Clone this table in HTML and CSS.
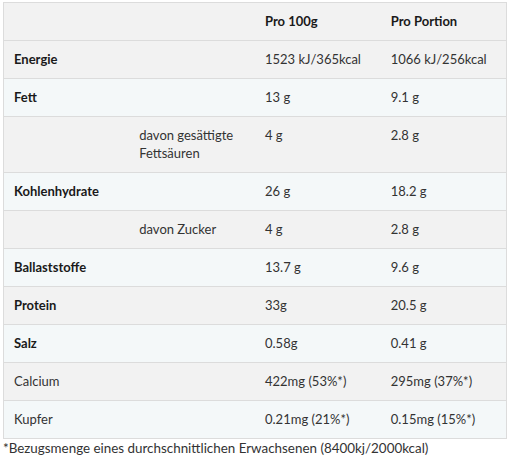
FILE: index.html
```html
<!DOCTYPE html>
<html lang="de">
<head>
<meta charset="utf-8">
<link rel="stylesheet" href="styles.css">
</head>
<body>
<div class="wrap">
<table class="nut">
<thead>
<tr><th></th><th></th><th>Pro 100g</th><th>Pro Portion</th></tr>
</thead>
<tbody>
<tr class="g"><td class="b">Energie</td><td></td><td>1523 kJ/365kcal</td><td>1066 kJ/256kcal</td></tr>
<tr class="s"><td class="b">Fett</td><td></td><td>13 g</td><td>9.1 g</td></tr>
<tr class="g"><td></td><td>davon gesättigte Fettsäuren</td><td>4 g</td><td>2.8 g</td></tr>
<tr class="s"><td class="b">Kohlenhydrate</td><td></td><td>26 g</td><td>18.2 g</td></tr>
<tr class="g"><td></td><td>davon Zucker</td><td>4 g</td><td>2.8 g</td></tr>
<tr class="s"><td class="b">Ballaststoffe</td><td></td><td>13.7 g</td><td>9.6 g</td></tr>
<tr class="g"><td class="b">Protein</td><td></td><td>33g</td><td>20.5 g</td></tr>
<tr class="s"><td class="b">Salz</td><td></td><td>0.58g</td><td>0.41 g</td></tr>
<tr class="g"><td>Calcium</td><td></td><td>422mg (53%*)</td><td>295mg (37%*)</td></tr>
<tr class="s"><td>Kupfer</td><td></td><td>0.21mg (21%*)</td><td>0.15mg (15%*)</td></tr>
</tbody>
</table>
<p class="note">*Bezugsmenge eines durchschnittlichen Erwachsenen (8400kj/2000kcal)</p>
</div>
</body>
</html>
```
FILE: styles.css
```css
html, body {
  margin: 0;
  padding: 0;
  background: #fff;
}
body {
  font-family: "Lato", "Liberation Sans", sans-serif;
  font-size: 13px;
  color: #222;
}
.wrap {
  padding: 2px 0 0 3px;
  width: 504px;
}
.nut {
  width: 504px;
  border-collapse: collapse;
  table-layout: fixed;
  border: 1px solid #dcdcdc;
}
.nut th, .nut td {
  text-align: left;
  vertical-align: top;
  padding: 9px 10px 10px;
  line-height: 18px;
  border-top: 1px solid #dcdcdc;
  color: #333;
}
.nut th {
  font-weight: 700;
  color: #1a1a1a;
  background: #f2f2f2;
}
.nut .g td { background: #f2f2f2; }
.nut .s td { background: #f4f8f9; }
.nut .b { font-weight: 700; color: #1a1a1a; }
.note {
  margin: 0;
  padding: 0;
  font-size: 13.4px;
  line-height: 18px;
  color: #333;
}
```
